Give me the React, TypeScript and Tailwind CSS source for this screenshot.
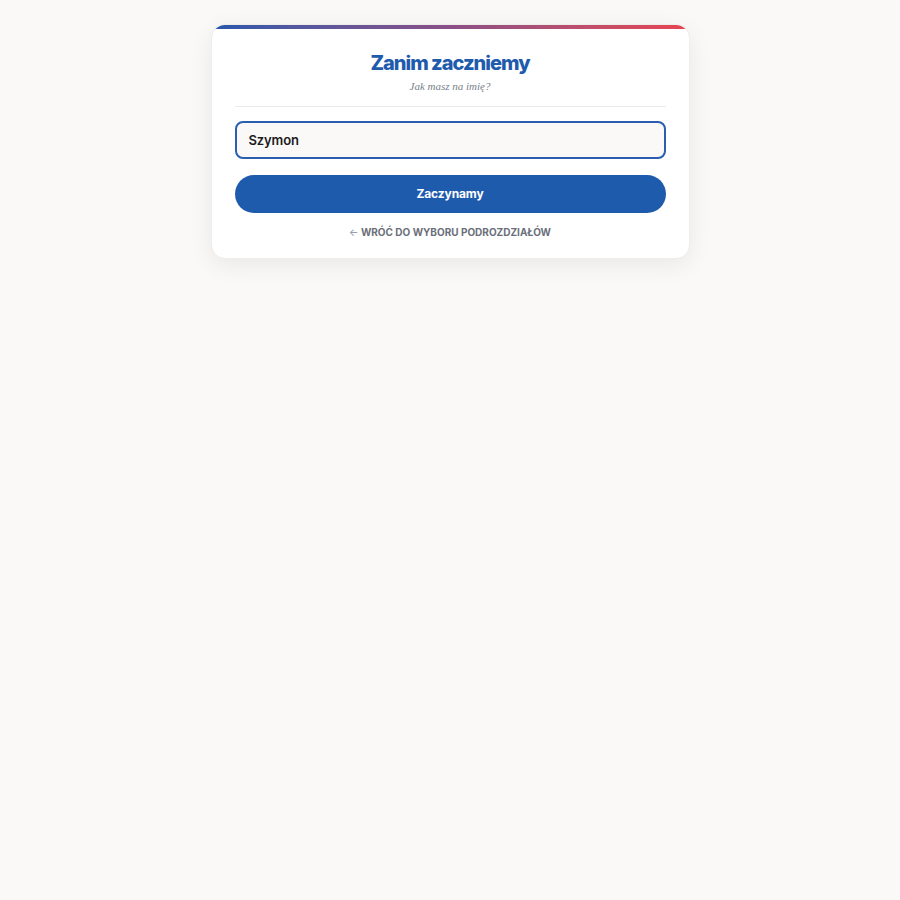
import React, { useState } from 'react';

export default function App() {
  const [name, setName] = useState('Szymon');

  return (
    <div className="min-h-screen bg-[#faf9f7] flex justify-center pt-[24px]" style={{ fontFamily: 'Inter, "Noto Sans", sans-serif' }}>
      <div className="w-[479px] h-fit bg-white rounded-[14px] overflow-hidden border border-[#efedea] shadow-[0_6px_24px_rgba(0,0,0,0.07)]">
        <div className="h-[4px] bg-gradient-to-r from-[#2558ad] via-[#8a4f86] to-[#e8434f]" />
        <div className="px-[23px] pt-[20px] pb-[18px]">
          <div className="text-center">
            <h1 className="text-[20px] leading-[28px] font-extrabold tracking-[-0.05em] text-[#1f5bad]">
              Zanim zaczniemy
            </h1>
            <p className="mt-[1px] text-[11px] leading-[16px] italic text-[#7a7f8a]" style={{ fontFamily: '"Liberation Serif", serif' }}>
              Jak masz na imię?
            </p>
          </div>
          <div className="mt-[12px] border-t border-[#ecebe8]" />
          <input
            value={name}
            onChange={(e) => setName(e.target.value)}
            className="mt-[14px] w-full h-[38px] px-[12px] rounded-[8px] border-2 border-[#2a5fb0] bg-[#faf9f7] text-[13px] font-semibold tracking-[-0.01em] text-[#1c1c1c] outline-none"
          />
          <button className="mt-[16px] w-full h-[38px] rounded-full bg-[#1f5bad] text-white text-[12px] font-bold tracking-[-0.01em]">
            Zaczynamy
          </button>
          <div className="mt-[12px] text-center text-[10px] font-bold uppercase text-[#6b6f7a]">
            <span className="font-normal text-[#8b8f98]">←</span> Wróć do wyboru podrozdziałów
          </div>
        </div>
      </div>
    </div>
  );
}
